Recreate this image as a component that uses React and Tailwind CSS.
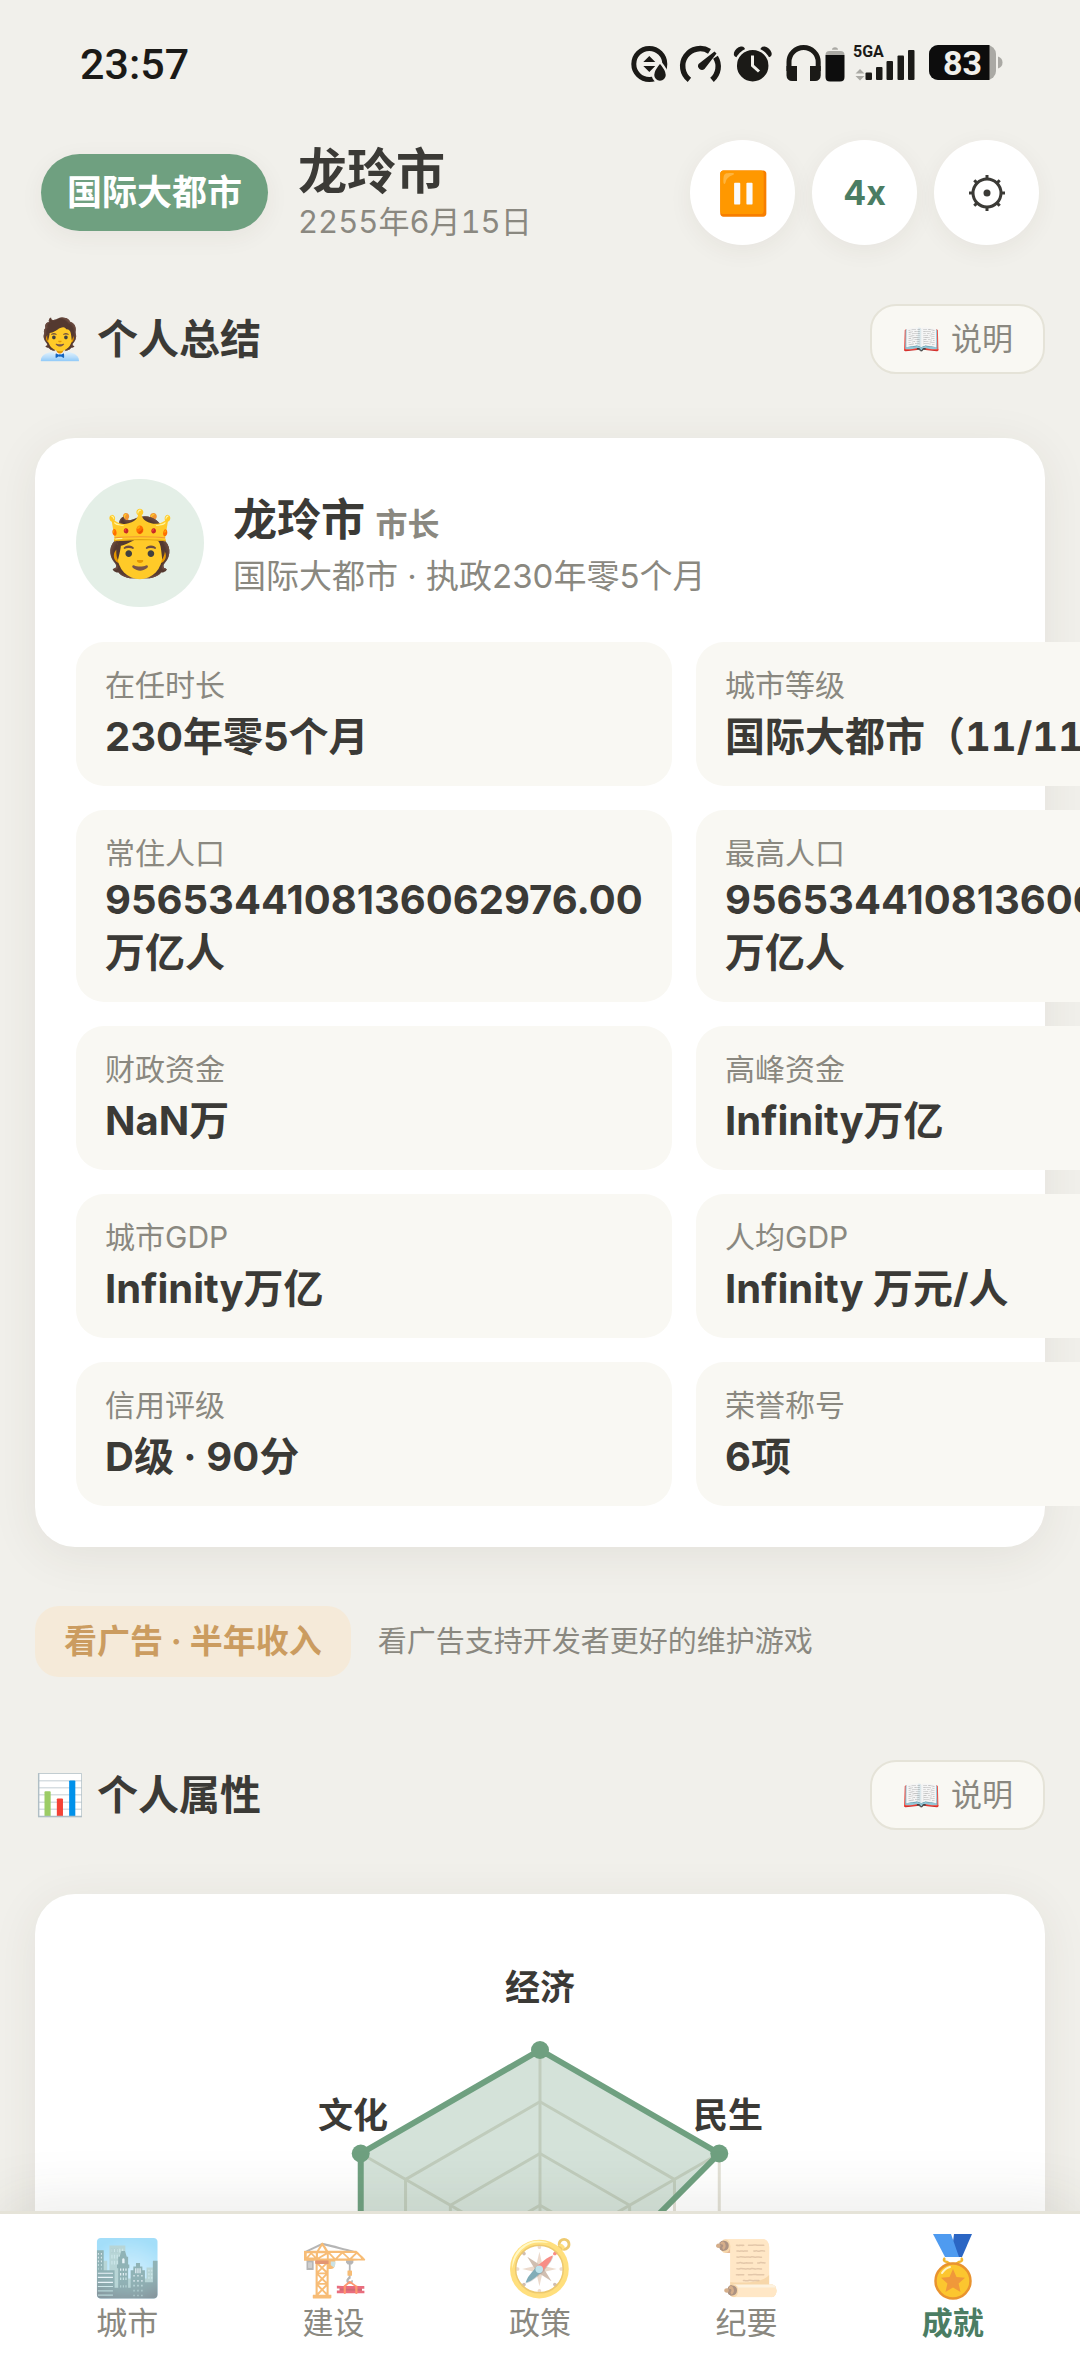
const STATS = [
  { label: '在任时长', value: '230年零5个月' },
  { label: '城市等级', value: '国际大都市（11/11）', tabular: true },
  { label: '常住人口', value: '9565344108136062976.00万亿人' },
  { label: '最高人口', value: '9565344108136062976.00万亿人' },
  { label: '财政资金', value: 'NaN万' },
  { label: '高峰资金', value: 'Infinity万亿' },
  { label: '城市GDP', value: 'Infinity万亿' },
  { label: '人均GDP', value: 'Infinity 万元/人' },
  { label: '信用评级', value: 'D级 · 90分' },
  { label: '荣誉称号', value: '6项' },
]

const TABS = [
  { icon: '🏙️', label: '城市' },
  { icon: '🏗️', label: '建设' },
  { icon: '🧭', label: '政策' },
  { icon: '📜', label: '纪要' },
  { icon: <MedalIcon />, label: '成就', active: true },
]

// Radar values, clockwise from the top
const VALUES = [1, 1, 0.27, 1, 1, 1]

const AXIS_LABELS = [
  { text: '经济', x: 300, y: 43 },
  { text: '民生', x: 488, y: 171 },
  { text: '文化', x: 113, y: 171 },
]

// Chart centre and outer radius
const CX = 300
const CY = 300
const R = 207

const vertex = (i, ratio) => {
  const a = (Math.PI / 3) * i - Math.PI / 2
  return [CX + R * ratio * Math.cos(a), CY + R * ratio * Math.sin(a)]
}

function RadarChart() {
  const ring = (ratio) => VALUES.map((_, i) => vertex(i, ratio).join(',')).join(' ')
  const shape = VALUES.map((value, i) => vertex(i, value))

  return (
    <svg viewBox="0 0 600 600" className="mx-auto block w-[600px]" role="img" aria-label="个人属性">
      <g fill="none" stroke="#e2e0d6" strokeWidth="3">
        {[0.25, 0.5, 0.75, 1].map((ratio) => (
          <polygon key={ratio} points={ring(ratio)} />
        ))}
        {VALUES.map((_, i) => {
          const [x, y] = vertex(i, 1)
          return <line key={i} x1={CX} y1={CY} x2={x} y2={y} />
        })}
      </g>
      <polygon
        points={shape.map((p) => p.join(',')).join(' ')}
        fill="#6fa080"
        fillOpacity="0.3"
        stroke="#6fa080"
        strokeWidth="6"
        strokeLinejoin="round"
      />
      {shape.map(([x, y], i) => (
        <circle key={i} cx={x} cy={y} r="9" fill="#6fa080" />
      ))}
      {AXIS_LABELS.map((l) => (
        <text key={l.text} x={l.x} y={l.y} textAnchor="middle" className="fill-[#3b3a36] text-[35px] font-bold">
          {l.text}
        </text>
      ))}
    </svg>
  )
}

function MedalIcon() {
  return (
    <svg viewBox="0 0 40 66" className="mt-px h-[66px] w-10" aria-hidden="true">
      <path d="M21 0H39L29 23H18z" fill="#2b66c4" />
      <path d="M0 0H18L26 23H12z" fill="#4f9bf0" />
      <path d="M12 24q-3 3 2 4l3 2h6l3-2q5-1 2-4" fill="none" stroke="#f2b62e" strokeWidth="2.5" />
      <circle cx="20" cy="47" r="17.5" fill="#fcc62f" stroke="#e9932f" strokeWidth="2.5" />
      <path d="M9 39a14 14 0 0 1 8-6" fill="none" stroke="#fff3c4" strokeWidth="2" strokeLinecap="round" />
      <path
        d="M20 35l3.500 8 8.500.8-6.400 5.700 1.900 8.500-7.500-4.500-7.500 4.500 1.900-8.500L8 43.800l8.500-.8z"
        fill="#f0983a"
      />
    </svg>
  )
}

function GearIcon() {
  return (
    <svg viewBox="0 0 38 38" className="mx-auto size-[38px]" aria-hidden="true">
      <g fill="none" stroke="#3b3a36" strokeWidth="3">
        <circle cx="19" cy="19" r="14" />
        {[0, 45, 90, 135, 180, 225, 270, 315].map((deg) => (
          <path key={deg} d="M19 1v4" transform={`rotate(${deg} 19 19)`} />
        ))}
      </g>
      <circle cx="19" cy="19" r="3.500" fill="#3b3a36" />
    </svg>
  )
}

function StatusBar() {
  return (
    <div className="flex items-center justify-between pt-[38px] pr-[76px] pl-20 font-['Roboto',sans-serif] text-[#1b1a17]">
      <span className="text-[43px] leading-[52px] font-medium">23:57</span>
      <svg viewBox="0 0 376 46" className="w-[376px]" aria-hidden="true">
        {/* data saver */}
        <circle cx="21.300" cy="23" r="15.500" fill="none" stroke="currentColor" strokeWidth="5" />
        <path d="M21.300 15l6 6h-12zM21.300 31l6-6h-12z" fill="currentColor" />
        <path
          d="M32 21q7 8 7 13a7 7 0 0 1-14 0q0-5 7-13z"
          fill="currentColor"
          stroke="#f1f0eb"
          strokeWidth="2.500"
        />

        {/* gauge */}
        <g fill="none" stroke="currentColor" strokeWidth="5.500">
          <path d="M61.400 38.900A17.500 17.500 0 0 1 81.500 10.300" />
          <path d="M87.500 16.200A17.500 17.500 0 0 1 84 38.900" />
        </g>
        <path d="M86.500 10.500l2 2L76.500 28a4 4 0 0 1-6-5z" fill="currentColor" />

        {/* alarm */}
        <g fill="currentColor">
          <ellipse cx="111.500" cy="11" rx="6.500" ry="4.500" transform="rotate(-42 111.500 11)" />
          <ellipse cx="138" cy="11" rx="6.500" ry="4.500" transform="rotate(42 138 11)" />
          <circle cx="124.700" cy="24.700" r="17" stroke="#f1f0eb" strokeWidth="2.500" />
        </g>
        <path d="M124.500 14.500V24.500L131 30.500" fill="none" stroke="#f1f0eb" strokeWidth="3" />

        {/* headphones and their charge */}
        <path d="M161 30V21a14.600 14.600 0 0 1 29.200 0V30" fill="none" stroke="currentColor" strokeWidth="5" />
        <path d="M158.500 25H169V40h-5a5.500 5.500 0 0 1-5.500-5.500zM192.700 25H182V40h5.200a5.500 5.500 0 0 0 5.500-5.500z" fill="currentColor" />
        <path d="M204 8.700q0-2.500 3-2.500t3 2.500zM197.500 14q0-4 4-4h11q4 0 4 4z" fill="#aaa9a4" />
        <path d="M197.500 14h19v22q0 4.500-4.500 4.500h-10q-4.500 0-4.500-4.500z" fill="#0d0d0d" />

        {/* mobile signal */}
        <text x="225" y="16" fill="currentColor" className="text-[16px] font-bold">5GA</text>
        <path d="M232 28l4.500 4.500h-9zM232 39.500l4.500-4.500h-9z" fill="#aaa9a4" />
        <g fill="currentColor">
          <rect x="237.500" y="31.500" width="6.500" height="7.500" rx="1" />
          <rect x="248" y="26" width="6.500" height="13" rx="1" />
          <rect x="258.500" y="20" width="6.500" height="19" rx="1" />
          <rect x="269.500" y="14.500" width="6.500" height="24.500" rx="1" />
          <rect x="280" y="9" width="6.500" height="30" rx="1" />
        </g>

        {/* battery */}
        <rect x="301" y="4" width="67" height="35" rx="9" fill="#aaa9a4" />
        <path d="M310 4H361.500V39H310a9 9 0 0 1-9-9V13a9 9 0 0 1 9-9z" fill="#0d0d0d" />
        <path d="M370 15.500q4.500 1.500 4.500 6t-4.500 6z" fill="#aaa9a4" />
        <text x="334.500" y="33.500" textAnchor="middle" fill="#f1f0eb" className="text-[34px] font-bold">83</text>
      </svg>
    </div>
  )
}

function RoundButton({ label, children }) {
  return (
    <button
      aria-label={label}
      className="size-[105px] rounded-full bg-white text-[42px] text-[#4b7d63] shadow-[0_6px_24px_rgba(60,55,40,0.06)]"
    >
      {children}
    </button>
  )
}

function SectionHeader({ icon, title }) {
  return (
    <div className="flex items-center justify-between">
      <h2 className="flex items-center gap-3 text-[41px] leading-[56px] font-bold">
        <span className="text-[40px]">{icon}</span>
        {title}
      </h2>
      <button className="flex h-[70px] items-center gap-[10px] rounded-[26px] border-2 border-[#e5e3d8] bg-[#f9f8f3] px-[30px] text-[31px] text-[#8a8880]">
        <span>📖</span>
        <span>说明</span>
      </button>
    </div>
  )
}

export default function App() {
  return (
    <div className="flex h-screen flex-col overflow-hidden bg-[#f1f0eb] font-['Inter','Noto_Sans_CJK_SC',sans-serif] text-[#3b3a36]">
      <StatusBar />

      <header className="flex items-center gap-[30px] px-[41px] pt-[50px]">
        <span className="rounded-full bg-[#6fa080] px-[26px] text-[35px] leading-[77px] font-bold text-white shadow-[0_6px_24px_rgba(60,55,40,0.06)]">
          国际大都市
        </span>
        <div className="flex-1">
          <h1 className="text-[49px] leading-[58px] font-bold">龙玲市</h1>
          <p className="text-[31px] leading-[42px] text-[#8a8880] tabular-nums">2255年6月15日</p>
        </div>
        <div className="flex gap-[17px]">
          <RoundButton label="暂停">⏸️</RoundButton>
          <RoundButton label="倍速">
            <span className="block text-[34px] font-bold">4x</span>
          </RoundButton>
          <RoundButton label="设置">
            <GearIcon />
          </RoundButton>
        </div>
      </header>

      <main className="min-h-0 flex-1 overflow-x-hidden overflow-y-auto px-[35px] pt-[59px] [scrollbar-width:none]">
        <SectionHeader icon="🧑‍💼" title="个人总结" />

        <section className="mt-[64px] rounded-[40px] bg-white p-[41px] shadow-[0_8px_48px_rgba(60,55,40,0.08)]">
          <div className="flex items-center gap-[29px]">
            <div className="flex size-[128px] items-center justify-center rounded-full bg-[#e4efe7] text-[64px]">🫅</div>
            <div>
              <p className="text-[44px] leading-[60px] font-bold">
                龙玲市 <span className="text-[32px] text-[#8a8880]">市长</span>
              </p>
              <p className="text-[33px] leading-[42px] text-[#8a8880]">国际大都市 · 执政230年零5个月</p>
            </div>
          </div>

          <dl className="mt-[35px] grid grid-cols-[repeat(2,596px)] gap-6">
            {STATS.map((stat) => (
              <div key={stat.label} className="rounded-[28px] bg-[#f9f8f3] px-[29px] py-[23px]">
                <dt className="text-[30px] leading-[40px] text-[#8a8880]">{stat.label}</dt>
                <dd
                  className={`flex min-h-[58px] items-end text-[40px] leading-[53px] font-bold ${stat.tabular ? 'tabular-nums' : ''}`}
                >
                  {stat.value}
                </dd>
              </div>
            ))}
          </dl>
        </section>

        <div className="mt-[59px] flex items-center gap-[27px]">
          <button className="h-[71px] rounded-[24px] bg-[#f5ead9] px-[29px] text-[33px] font-bold text-[#cb9c60]">
            看广告 · 半年收入
          </button>
          <span className="text-[29px] text-[#8a8880]">看广告支持开发者更好的维护游戏</span>
        </div>

        <div className="mt-[83px]">
          <SectionHeader icon="📊" title="个人属性" />
        </div>

        <section className="mt-[64px] rounded-[40px] bg-white px-[41px] pt-[63px] shadow-[0_8px_48px_rgba(60,55,40,0.08)]">
          <RadarChart />
        </section>
      </main>

      <nav className="relative z-10 flex h-[161px] border-t-3 border-[#e5e3d8] bg-white px-6 pt-[19px] shadow-[0_-8px_60px_rgba(60,55,40,0.10)]">
        {TABS.map((tab) => (
          <a
            key={tab.label}
            href="#"
            className={`flex flex-1 flex-col items-center text-[31px] ${tab.active ? 'font-bold text-[#4b7d63]' : 'text-[#8a8880]'}`}
          >
            <span className={`h-[70px] text-[55px] leading-[68px] ${tab.active ? '' : 'opacity-60'}`}>{tab.icon}</span>
            <span className="leading-[40px]">{tab.label}</span>
          </a>
        ))}
      </nav>
    </div>
  )
}
